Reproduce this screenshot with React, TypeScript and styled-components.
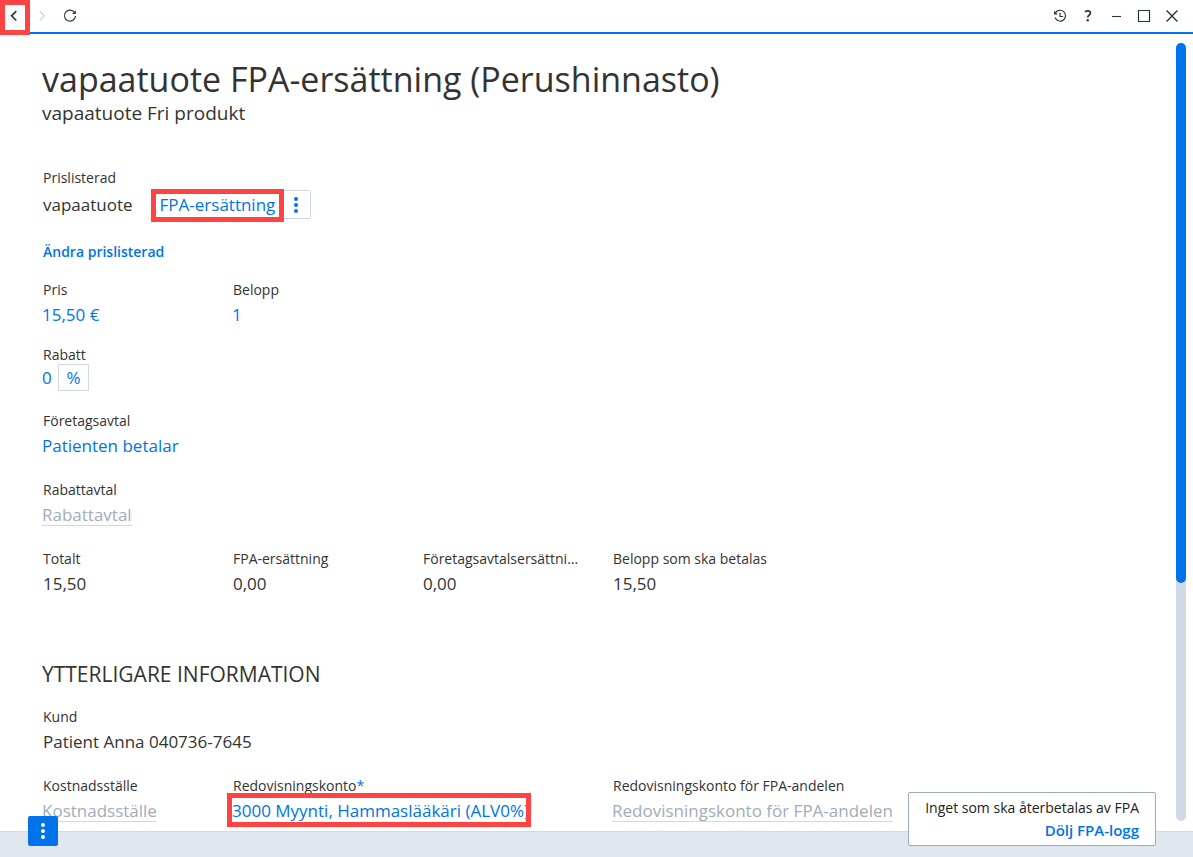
import React, { useId } from "react";
import styled, { createGlobalStyle, css } from "styled-components";

const color = {
  blue: "#0073ea",
  text: "#333333",
  icon: "#2d3640",
  muted: "#a0adba",
  line: "#d0dae4",
  footer: "#e0e7ee",
  mark: "#ff4242",
};

const GlobalStyle = createGlobalStyle`
  *, *::before, *::after { box-sizing: border-box; }
  body {
    margin: 0;
    background: #fff;
    color: ${color.text};
    font-family: "Open Sans", "Noto Sans", sans-serif;
  }
  button, input { font: inherit; color: inherit; }
  button { padding: 0; border: 0; background: none; cursor: pointer; }
`;

const Window = styled.div`
  position: relative;
  display: flex;
  flex-direction: column;
  height: 100vh;
  overflow: hidden;
`;

const TitleBar = styled.header`
  flex: none;
  display: flex;
  justify-content: space-between;
  height: 34px;
  border-bottom: 2px solid ${color.blue};
`;

const IconGroup = styled.div`
  display: flex;
  &:last-child { padding-right: 7px; }
`;

const marked = css`
  position: relative;
  &::after {
    content: "";
    position: absolute;
    border: 5px solid ${color.mark};
    pointer-events: none;
  }
`;

const IconButton = styled.button<{ $faded?: boolean; $marked?: boolean }>`
  display: grid;
  place-items: center;
  width: 28px;
  height: 32px;
  color: ${(p) => (p.$faded ? color.line : color.icon)};
  ${(p) =>
    p.$marked &&
    css`
      ${marked}
      &::after { inset: 0 -2px -3px 0; z-index: 1; }
    `}
`;

const Body = styled.div`
  flex: 1;
  min-height: 0;
  display: flex;
`;

const Content = styled.main`
  flex: 1;
  min-width: 0;
  overflow: auto;
  scrollbar-width: none;
  padding: 22px 20px 0 42px;
`;

const ScrollTrack = styled.div`
  flex: none;
  width: 10px;
  margin: 9px 7px 10px 0;
  border-radius: 5px;
  background: ${color.line};
`;

const ScrollThumb = styled.div`
  height: 540px;
  max-height: 70%;
  border-radius: 5px;
  background: ${color.blue};
`;

const Footer = styled.footer`
  flex: none;
  height: 26px;
  border-top: 1px solid ${color.line};
  background: ${color.footer};
`;

const Title = styled.h1`
  margin: 0;
  font-size: 34px;
  line-height: 46px;
  font-weight: 400;
  white-space: nowrap;
`;

const Subtitle = styled.p`
  margin: 0 0 44px;
  font-size: 19px;
  line-height: 22px;
`;

const Heading = styled.h2`
  margin: 60px 0 18px;
  font-size: 21px;
  line-height: 30px;
  font-weight: 400;
`;

const Row = styled.div<{ $gap?: number }>`
  display: grid;
  grid-template-columns: repeat(4, 190px);
  margin-top: ${(p) => p.$gap ?? 19}px;
`;

const FieldBox = styled.div<{ $span?: number }>`
  grid-column: span ${(p) => p.$span ?? 1};
  min-width: 0;
  font-size: 17px;
  line-height: 30px;
  white-space: nowrap;
`;

const Label = styled.label<{ $tight?: boolean }>`
  display: block;
  max-width: 158px;
  padding-left: 1px;
  overflow: hidden;
  text-overflow: ellipsis;
  font-size: 14px;
  line-height: ${(p) => (p.$tight ? 18 : 20)}px;
`;

const WideLabel = styled(Label)`
  max-width: none;
  overflow: visible;
`;

const Required = styled.span`
  color: ${color.blue};
`;

const Value = styled.output`
  display: block;
  padding-left: 1px;
`;

const ValueInput = styled.input<{ $short?: boolean }>`
  display: block;
  width: ${(p) => (p.$short ? "16px" : "160px")};
  height: ${(p) => (p.$short ? 26 : 30)}px;
  padding: 0;
  border: 0;
  background: none;
  color: ${color.blue};
`;

const ValueButton = styled.button`
  display: block;
  color: ${color.blue};
`;

const EmptyButton = styled.button`
  display: block;
  height: 26px;
  margin-bottom: 4px;
  padding-top: 4px;
  line-height: 21px;
  color: ${color.muted};
  border-bottom: 1px solid ${color.line};
`;

const Inline = styled.div`
  display: flex;
  align-items: center;
`;

const UnitButton = styled.button`
  width: 31px;
  height: 27px;
  line-height: 25px;
  border: 1px solid ${color.line};
  color: ${color.blue};
`;

const PriceLine = styled.div`
  display: flex;
  gap: 27px;
  margin-top: 2px;
  padding-left: 1px;
  font-size: 17px;
  line-height: 30px;
`;

const ItemButtons = styled.div`
  display: flex;
  align-items: flex-start;
`;

const ItemButton = styled.button`
  ${marked}
  color: ${color.blue};
  &::after { inset: -1px -9px -2px; }
`;

const ItemMenu = styled.button`
  display: grid;
  place-items: center start;
  width: 36px;
  height: 29px;
  padding-left: 19px;
  border: 1px solid ${color.line};
  border-left: 0;
  border-radius: 0 2px 2px 0;
  color: ${color.blue};
`;

const TextLink = styled.a`
  display: block;
  width: fit-content;
  font-weight: 600;
  color: ${color.blue};
  text-decoration: none;
`;

const EditLink = styled(TextLink)`
  margin: 22px 0 18px;
  padding-left: 1px;
  font-size: 14px;
  line-height: 20px;
`;

const LogLink = styled(TextLink)`
  font-size: 15px;
`;

const AccountFrame = styled.div`
  ${marked}
  width: 294px;
  &::after { inset: -3px -5px -1px; }
`;

const AccountButton = styled(ValueButton)`
  width: 100%;
  overflow: hidden;
  text-align: left;
`;

const ActionButton = styled.button`
  position: absolute;
  left: 28px;
  bottom: 11px;
  display: grid;
  place-items: center;
  width: 30px;
  height: 30px;
  border-radius: 2px;
  background: ${color.blue};
  color: #fff;
`;

const LogPanel = styled.aside`
  position: absolute;
  right: 37px;
  bottom: 11px;
  display: flex;
  flex-direction: column;
  align-items: flex-end;
  width: 248px;
  padding: 4px 16px;
  border: 1px solid #9aabbb;
  border-radius: 2px;
  background: #fff;
  color: #222;
  font-size: 14px;
  line-height: 22px;
  white-space: nowrap;
`;

const Icon = ({ children }: { children: React.ReactNode }) => (
  <svg width="16" height="16" viewBox="0 0 16 16" fill="none" stroke="currentColor" strokeWidth="1.2" aria-hidden="true">
    {children}
  </svg>
);

const Dots = () => (
  <svg width="4" height="16" viewBox="0 0 4 16" fill="currentColor" aria-hidden="true">
    <circle cx="2" cy="2" r="2" />
    <circle cx="2" cy="8" r="2" />
    <circle cx="2" cy="14" r="2" />
  </svg>
);

type FieldProps = { label: string; value: string };

const ReadField = ({ label, value }: FieldProps) => {
  const id = useId();
  return (
    <FieldBox>
      <Label htmlFor={id}>{label}</Label>
      <Value id={id}>{value}</Value>
    </FieldBox>
  );
};

const InputField = ({ label, value }: FieldProps) => {
  const id = useId();
  return (
    <FieldBox>
      <Label htmlFor={id}>{label}</Label>
      <ValueInput id={id} defaultValue={value} />
    </FieldBox>
  );
};

const PickField = ({ label, value }: FieldProps) => {
  const id = useId();
  return (
    <FieldBox>
      <Label htmlFor={id}>{label}</Label>
      <ValueButton id={id}>{value}</ValueButton>
    </FieldBox>
  );
};

const EmptyField = ({ label }: { label: string }) => {
  const id = useId();
  return (
    <FieldBox>
      <WideLabel htmlFor={id}>{label}</WideLabel>
      <EmptyButton id={id}>{label}</EmptyButton>
    </FieldBox>
  );
};

export default function App() {
  return (
    <Window>
      <GlobalStyle />
      <TitleBar>
        <IconGroup>
          <IconButton $marked aria-label="Tillbaka">
            <Icon><path d="M10.3 3.2 5.6 7.8l4.7 4.7" strokeWidth="1.7" /></Icon>
          </IconButton>
          <IconButton $faded aria-label="Framåt">
            <Icon><path d="m5.7 3.2 4.6 4.6-4.6 4.7" strokeWidth="1.6" /></Icon>
          </IconButton>
          <IconButton aria-label="Uppdatera">
            <Icon>
              <path d="M12.6 4.6A5.5 5.5 0 1 0 13.5 8" />
              <path d="M13.8 2.3v3.8H10z" fill="currentColor" stroke="none" />
            </Icon>
          </IconButton>
        </IconGroup>
        <IconGroup>
          <IconButton aria-label="Historik">
            <Icon>
              <path d="M3.3 5.2A5.4 5.4 0 1 1 3 9.4" />
              <path d="M2 2.8v3.8h3.8z" fill="currentColor" stroke="none" />
              <path d="M8 4.7v3.8h3.2" />
            </Icon>
          </IconButton>
          <IconButton aria-label="Hjälp">
            <Icon>
              <path d="M5 3.9c.8-.7 1.700-1 2.700-1 1.600 0 2.700.8 2.700 2.100 0 2.100-2.700 2.100-2.700 4.500" strokeWidth="1.8" />
              <circle cx="7.7" cy="12.200" r="1.200" fill="currentColor" stroke="none" />
            </Icon>
          </IconButton>
          <IconButton aria-label="Minimera">
            <Icon><path d="M4 8.5h9" strokeWidth="1.1" /></Icon>
          </IconButton>
          <IconButton aria-label="Maximera">
            <Icon><path d="M2.5 2.5h11v11h-11z" /></Icon>
          </IconButton>
          <IconButton aria-label="Stäng">
            <Icon><path d="m2.6 2.6 10.8 10.8M13.4 2.6 2.6 13.4" strokeWidth="1.4" /></Icon>
          </IconButton>
        </IconGroup>
      </TitleBar>

      <Body>
        <Content>
          <Title>vapaatuote FPA-ersättning (Perushinnasto)</Title>
          <Subtitle>vapaatuote Fri produkt</Subtitle>

          <Label as="div">Prislisterad</Label>
          <PriceLine>
            <span>vapaatuote</span>
            <ItemButtons>
              <ItemButton>FPA-ersättning</ItemButton>
              <ItemMenu aria-label="Fler val"><Dots /></ItemMenu>
            </ItemButtons>
          </PriceLine>
          <EditLink href="#prislisterad">Ändra prislisterad</EditLink>

          <Row $gap={0}>
            <InputField label="Pris" value="15,50 €" />
            <InputField label="Belopp" value="1" />
          </Row>
          <Row $gap={16}>
            <FieldBox>
              <Label $tight htmlFor="rabatt">Rabatt</Label>
              <Inline>
                <ValueInput id="rabatt" $short defaultValue="0" />
                <UnitButton aria-label="Rabattenhet %">%</UnitButton>
              </Inline>
            </FieldBox>
          </Row>
          <Row $gap={20}>
            <PickField label="Företagsavtal" value="Patienten betalar" />
          </Row>
          <Row>
            <EmptyField label="Rabattavtal" />
          </Row>
          <Row>
            <ReadField label="Totalt" value="15,50" />
            <ReadField label="FPA-ersättning" value="0,00" />
            <ReadField label="Företagsavtalsersättning" value="0,00" />
            <ReadField label="Belopp som ska betalas" value="15,50" />
          </Row>

          <Heading>YTTERLIGARE INFORMATION</Heading>
          <Row $gap={0}>
            <ReadField label="Kund" value="Patient Anna 040736-7645" />
          </Row>
          <Row>
            <EmptyField label="Kostnadsställe" />
            <FieldBox $span={2}>
              <Label htmlFor="konto">Redovisningskonto<Required>*</Required></Label>
              <AccountFrame>
                <AccountButton id="konto">3000 Myynti, Hammaslääkäri (ALV0%)</AccountButton>
              </AccountFrame>
            </FieldBox>
            <EmptyField label="Redovisningskonto för FPA-andelen" />
          </Row>
        </Content>
        <ScrollTrack>
          <ScrollThumb />
        </ScrollTrack>
      </Body>

      <Footer />
      <ActionButton aria-label="Åtgärder"><Dots /></ActionButton>
      <LogPanel>
        <span>Inget som ska återbetalas av FPA</span>
        <LogLink href="#fpa-logg">Dölj FPA-logg</LogLink>
      </LogPanel>
    </Window>
  );
}
